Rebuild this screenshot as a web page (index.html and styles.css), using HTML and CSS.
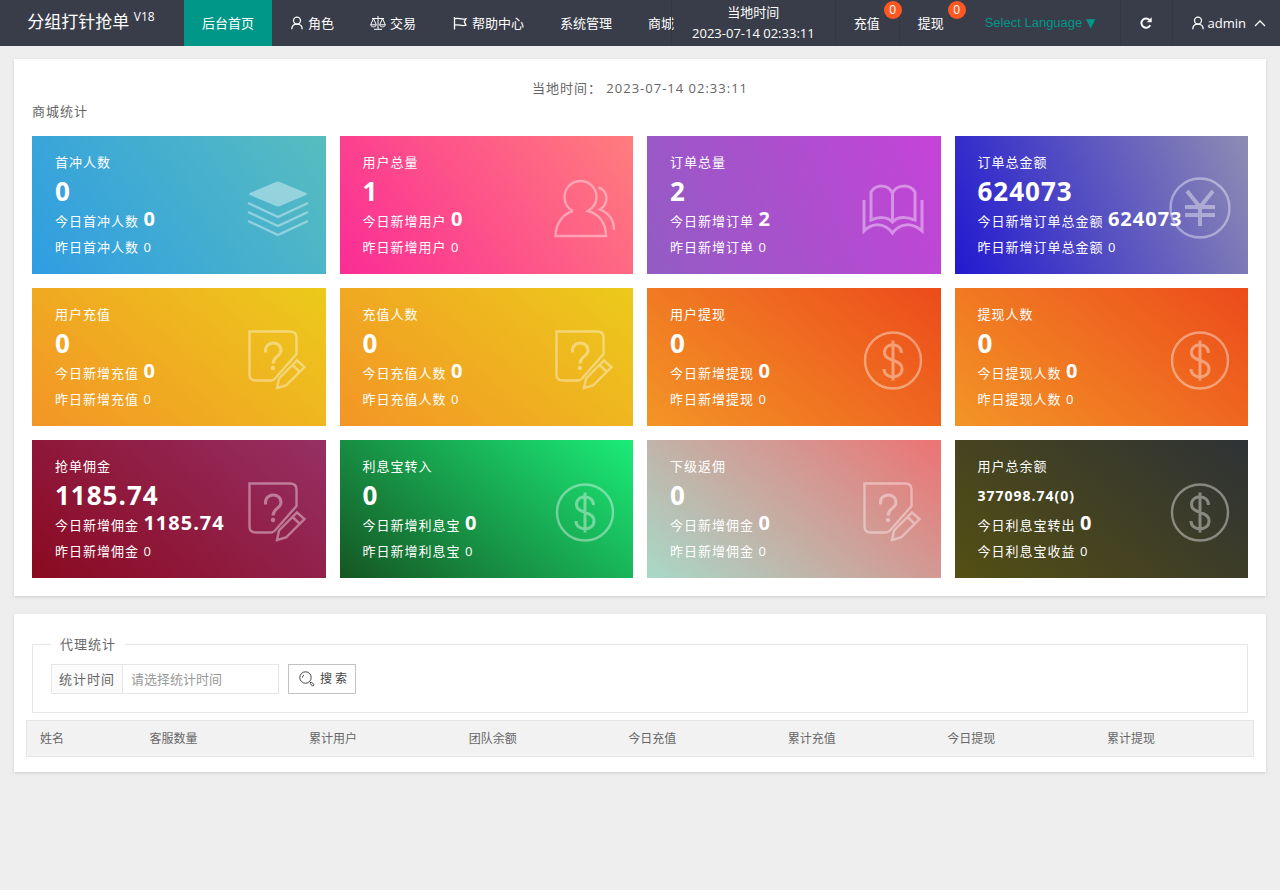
FILE: index.html
```html
<!DOCTYPE html>
<html lang="zh-CN">
<head>
<meta charset="utf-8">
<title>分组打针抢单</title>
<link rel="stylesheet" href="styles.css">
</head>
<body>
<svg class="sprite" aria-hidden="true">
  <symbol id="i-user" viewBox="0 0 14 16"><circle cx="7" cy="5.600" r="3.500"/><path d="M1.800 14.200c0-3.200 1.900-5.100 5.200-5.100s5.200 1.900 5.200 5.100"/></symbol>
  <symbol id="i-scale" viewBox="0 0 16 16"><path d="M8 1v13M4 14.300h8M2 3.500h12M3.500 3.500L.7 9.800h5.600zM12.500 3.500L9.700 9.800h5.600zM.7 9.800c.3 2.700 5.300 2.700 5.600 0M9.700 9.800c.3 2.700 5.300 2.700 5.600 0"/></symbol>
  <symbol id="i-flag" viewBox="0 0 16 16"><path d="M2.500 2v12.500M2.500 3.800c4-1.500 6 1.200 11.500 0l-1.700 3L14 10.200c-5 1.300-7.500-1.200-11.500 0"/></symbol>
  <symbol id="i-layers" viewBox="0 0 64 64"><path class="solid" d="M30 6q2-1 4 0l26 11q2 1 0 2L34 30q-2 1-4 0L4 19q-2-1 0-2z"/><path d="M2 27l30 14 30-14M2 36l30 14 30-14M2 45l30 14 30-14"/></symbol>
  <symbol id="i-users" viewBox="0 0 64 64"><path d="M20 35C14 32 11.500 27 11.500 21a16 16 0 0 1 32 0C43.500 27 40 32 35 35 46 38 53 47 53 60H2.500C3 47 10 38 20 35M45.500 11.500C51 13 53.500 18 53.500 22 53.500 27 51 31 47 33.500 56 37 61 44 61 54"/></symbol>
  <symbol id="i-book" viewBox="0 0 64 64"><path class="heavy" d="M3 24V55C12 46 24 47 31.500 57 39 47 51 46 61 55V24M31.500 17C27 8 15 8 10 16V44C17 41 26 40 31.500 46 37 40 46 41 54 44V16C49 8 36 8 31.500 17V46"/></symbol>
  <symbol id="i-yen" viewBox="0 0 64 64"><circle cx="32" cy="32" r="29.500"/><path class="bar" d="M19 15l13 16 13-16M17 31h30M17 39h30M32 31v19"/></symbol>
  <symbol id="i-quiz" viewBox="0 0 64 64"><path d="M25 52.500H10q-6.500 0-6.500-6V3.500H44q6.500 0 6.500 6V26L29 50.500q-2 2-4 2"/><path d="M31 60l2-9.500L51 32.500l7.500 6.500L40 57.500zM46.500 37l7.500 7"/><path class="heavy" d="M19.500 24.500v-2c0-10 15.500-10 15.500 0 0 6-8 6-8 13"/><circle class="solid" cx="27" cy="40" r="2.200"/></symbol>
  <symbol id="i-dollar" viewBox="0 0 64 64"><circle cx="32" cy="32.500" r="28"/><path class="heavy" d="M32 12.500v40M40.500 25c0-11-17-11-17-.5C23.500 34 41 30.500 41 41c0 10.500-18 10.500-18 0"/></symbol>
</svg>

<header class="topbar">
  <a class="logo" href="#">分组打针抢单 <sup class="ver">V18</sup></a>
  <nav class="menu">
    <a class="item active" href="#">后台首页</a>
    <a class="item" href="#"><svg class="mini person"><use href="#i-user"/></svg>角色</a>
    <a class="item" href="#"><svg class="mini fine"><use href="#i-scale"/></svg>交易</a>
    <a class="item" href="#"><svg class="mini"><use href="#i-flag"/></svg>帮助中心</a>
    <a class="item" href="#">系统管理</a>
    <a class="item" href="#">商城</a>
  </nav>
  <div class="tools">
    <div class="tool clock"><span>当地时间</span><span>2023-07-14 02:33:11</span></div>
    <a class="tool" href="#">充值<span class="badge">0</span></a>
    <a class="tool plain" href="#">提现<span class="badge">0</span></a>
    <a class="tool language" href="#">Select Language<span class="arrow">▼</span></a>
    <button class="tool" type="button" aria-label="刷新"><svg class="reload" viewBox="0 0 16 16"><path d="M12.800 10.500A5.300 5.300 0 1 1 12 4.500"/><path class="head" d="M14.500 1.500v5.700H8.800z"/></svg></button>
    <a class="tool plain admin" href="#"><svg class="mini person"><use href="#i-user"/></svg>admin<svg class="chevron" viewBox="0 0 12 8"><path d="M1 7l5-5 5 5"/></svg></a>
  </div>
</header>

<main class="page">
  <section class="panel">
    <p class="now">当地时间： 2023-07-14 02:33:11</p>
    <h2 class="heading">商城统计</h2>
    <div class="cards">
      <article class="card sky"><div class="info"><h3>首冲人数</h3><p class="total">0</p><p>今日首冲人数 <b>0</b></p><p>昨日首冲人数 0</p></div><svg class="pic"><use href="#i-layers"/></svg></article>
      <article class="card pink"><div class="info"><h3>用户总量</h3><p class="total">1</p><p>今日新增用户 <b>0</b></p><p>昨日新增用户 0</p></div><svg class="pic"><use href="#i-users"/></svg></article>
      <article class="card purple"><div class="info"><h3>订单总量</h3><p class="total">2</p><p>今日新增订单 <b>2</b></p><p>昨日新增订单 0</p></div><svg class="pic"><use href="#i-book"/></svg></article>
      <article class="card blue"><div class="info"><h3>订单总金额</h3><p class="total">624073</p><p>今日新增订单总金额 <b>624073</b></p><p>昨日新增订单总金额 0</p></div><svg class="pic"><use href="#i-yen"/></svg></article>
      <article class="card yellow"><div class="info"><h3>用户充值</h3><p class="total">0</p><p>今日新增充值 <b>0</b></p><p>昨日新增充值 0</p></div><svg class="pic"><use href="#i-quiz"/></svg></article>
      <article class="card yellow"><div class="info"><h3>充值人数</h3><p class="total">0</p><p>今日充值人数 <b>0</b></p><p>昨日充值人数 0</p></div><svg class="pic"><use href="#i-quiz"/></svg></article>
      <article class="card orange"><div class="info"><h3>用户提现</h3><p class="total">0</p><p>今日新增提现 <b>0</b></p><p>昨日新增提现 0</p></div><svg class="pic"><use href="#i-dollar"/></svg></article>
      <article class="card orange"><div class="info"><h3>提现人数</h3><p class="total">0</p><p>今日提现人数 <b>0</b></p><p>昨日提现人数 0</p></div><svg class="pic"><use href="#i-dollar"/></svg></article>
      <article class="card crimson"><div class="info"><h3>抢单佣金</h3><p class="total">1185.74</p><p>今日新增佣金 <b>1185.74</b></p><p>昨日新增佣金 0</p></div><svg class="pic"><use href="#i-quiz"/></svg></article>
      <article class="card green"><div class="info"><h3>利息宝转入</h3><p class="total">0</p><p>今日新增利息宝 <b>0</b></p><p>昨日新增利息宝 0</p></div><svg class="pic"><use href="#i-dollar"/></svg></article>
      <article class="card salmon"><div class="info"><h3>下级返佣</h3><p class="total">0</p><p>今日新增佣金 <b>0</b></p><p>昨日新增佣金 0</p></div><svg class="pic"><use href="#i-quiz"/></svg></article>
      <article class="card olive"><div class="info"><h3>用户总余额</h3><p class="total small">377098.74(0)</p><p>今日利息宝转出 <b>0</b></p><p>今日利息宝收益 0</p></div><svg class="pic"><use href="#i-dollar"/></svg></article>
    </div>
  </section>

  <section class="panel agents">
    <form>
      <fieldset class="filter">
        <legend>代理统计</legend>
        <div class="row">
          <div class="field"><label for="range">统计时间</label><input id="range" type="text" placeholder="请选择统计时间"></div>
          <button class="search" type="button"><svg class="lens" viewBox="0 0 16 16"><circle cx="6.500" cy="6.500" r="5.700"/><path d="M3.500 6.500a3 3 0 0 1 1.500-2.600M10.500 10.500l1.500 1.500M11.200 12.500l1.300-1.300 2.700 2.500-1.500 1.500z"/></svg>搜 索</button>
        </div>
      </fieldset>
    </form>
    <table class="list">
      <thead><tr><th class="name">姓名</th><th>客服数量</th><th>累计用户</th><th>团队余额</th><th>今日充值</th><th>累计充值</th><th>今日提现</th><th>累计提现</th></tr></thead>
    </table>
  </section>
</main>
</body>
</html>
```

FILE: styles.css
```css
* { box-sizing: border-box; }
body {
  margin: 0;
  background: #eee;
  color: #666;
  font: 13px/22px "Open Sans", "Noto Sans CJK SC", sans-serif;
}
h2, h3, p { margin: 0; font-size: 13px; font-weight: 400; }
a { color: inherit; text-decoration: none; }
button, input { font: inherit; color: inherit; }
svg { fill: none; stroke: currentColor; flex: none; }
.sprite { display: none; }
.solid { fill: currentColor; stroke: none; }
.heavy { stroke-width: 3; }
.bar { stroke-width: 4; }

/* Top bar */
.topbar {
  display: flex;
  height: 46px;
  padding-bottom: 1px;
  background: #393d49;
  color: #fff;
  white-space: nowrap;
}
.logo {
  flex: none;
  width: 184px;
  padding-right: 2px;
  text-align: center;
  font-size: 17px;
  line-height: 44px;
}
.ver { font-size: 12px; line-height: 12px; }
.menu { display: flex; flex: 1; min-width: 0; }
.item {
  display: flex;
  flex: none;
  align-items: center;
  padding: 0 18px;
}
.active { height: 46px; background: #009688; }
.mini { width: 16px; height: 16px; margin-right: 4px; stroke-width: 1.3; }
.person { width: 14px; }
.fine { stroke-width: 1; }
.tools { display: flex; flex: none; }
.tool {
  display: flex;
  position: relative;
  align-items: center;
  padding: 0 19px 0 18px;
  background: none;
  border: 0;
  border-left: 1px solid #343843;
  color: #fff;
}
.plain { padding-right: 14px; }
.clock { flex-direction: column; justify-content: center; padding: 0 20px; }
.clock span:first-child { line-height: 20px; }
.badge {
  position: absolute;
  top: 1px;
  right: -3px;
  z-index: 1;
  width: 18px;
  height: 18px;
  border-radius: 9px;
  background: #ff5722;
  font-size: 12px;
  line-height: 18px;
  text-align: center;
}
.plain .badge { right: -8px; }
.language {
  padding: 0 24px 0 27px;
  border-left: 0;
  color: #009688;
  font-family: "Liberation Sans", Arial, sans-serif;
}
.arrow { margin-left: 4px; font-family: "DejaVu Sans", sans-serif; font-size: 12px; }
.reload { width: 14px; height: 14px; stroke-width: 2.2; }
.head { fill: currentColor; stroke: none; }
.admin .mini { margin-right: 3px; }
.chevron { width: 12px; height: 8px; margin-left: 8px; stroke-width: 1.3; }

/* Panels */
.page { display: grid; gap: 18px; padding: 13px 14px; }
.panel {
  padding: 18px;
  background: #fff;
  box-shadow: 0 1px 3px #ccc;
  letter-spacing: 1px;
}
.now { text-align: center; line-height: 23px; }
.heading { margin-bottom: 14px; }
.cards { display: grid; grid-template-columns: repeat(4, minmax(0, 1fr)); gap: 14px; }
.card {
  display: flex;
  align-items: center;
  padding: 13px 16px 14px 23px;
  color: #fff;
  line-height: 26px;
  white-space: nowrap;
}
.info { flex: 1; min-width: 0; }
.info b { font-size: 20px; line-height: 20px; }
.info .total { font-size: 26px; font-weight: 700; line-height: 33px; }
.info .small { font-size: 14px; }
.pic { width: 64px; height: 64px; margin-top: 7px; stroke-width: 2.4; opacity: .4; }
.sky { background: linear-gradient(-125deg, #57bdbf, #2f9de2); }
.pink { background: linear-gradient(-125deg, #ff7d7d, #fb2c95); }
.purple { background: linear-gradient(-113deg, #c543d8, #925cc3); }
.blue { background: linear-gradient(-113deg, #8e8cb3, #2219d0); }
.yellow { background: linear-gradient(-141deg, #ecca1b, #f39526); }
.orange { background: linear-gradient(-141deg, #ec4b1b, #f39526); }
.crimson { background: linear-gradient(-141deg, #963064, #8a0920); }
.green { background: linear-gradient(-141deg, #1bec78, #155623); }
.salmon { background: linear-gradient(-141deg, #ec7373, #a8d9c8); }
.olive { background: linear-gradient(-141deg, #2e3235, #544f13); }

/* Agent statistics */
.agents { padding: 18px 12px 15px; }
.filter {
  margin: 0 6px 7px;
  padding: 8px 18px 18px;
  border: 1px solid #e6e6e6;
}
.filter legend { padding: 0 9px; line-height: 24px; }
.row { display: flex; gap: 9px; }
.field { display: flex; width: 228px; height: 30px; border: 1px solid #e6e6e6; }
.field label {
  padding: 0 7px;
  border-right: 1px solid #e6e6e6;
  background: #fbfbfb;
  line-height: 28px;
}
.field input { flex: 1; min-width: 0; padding: 0 8px; border: 0; background: #fff; }
.field input::placeholder { color: #999; }
.search {
  display: flex;
  align-items: center;
  gap: 5px;
  height: 30px;
  padding: 0 8px 0 10px;
  border: 1px solid #c2c2c2;
  background: #fff;
  color: #444;
  font-size: 12px;
}
.lens { width: 16px; height: 16px; }
.list {
  width: 100%;
  border: 1px solid #e6e6e6;
  border-collapse: collapse;
  table-layout: fixed;
  background: #f2f2f2;
  letter-spacing: 0;
}
.list th { padding: 7px 13px; font-size: 12px; font-weight: 400; line-height: 21px; text-align: left; }
.list .name { width: 110px; }
```
